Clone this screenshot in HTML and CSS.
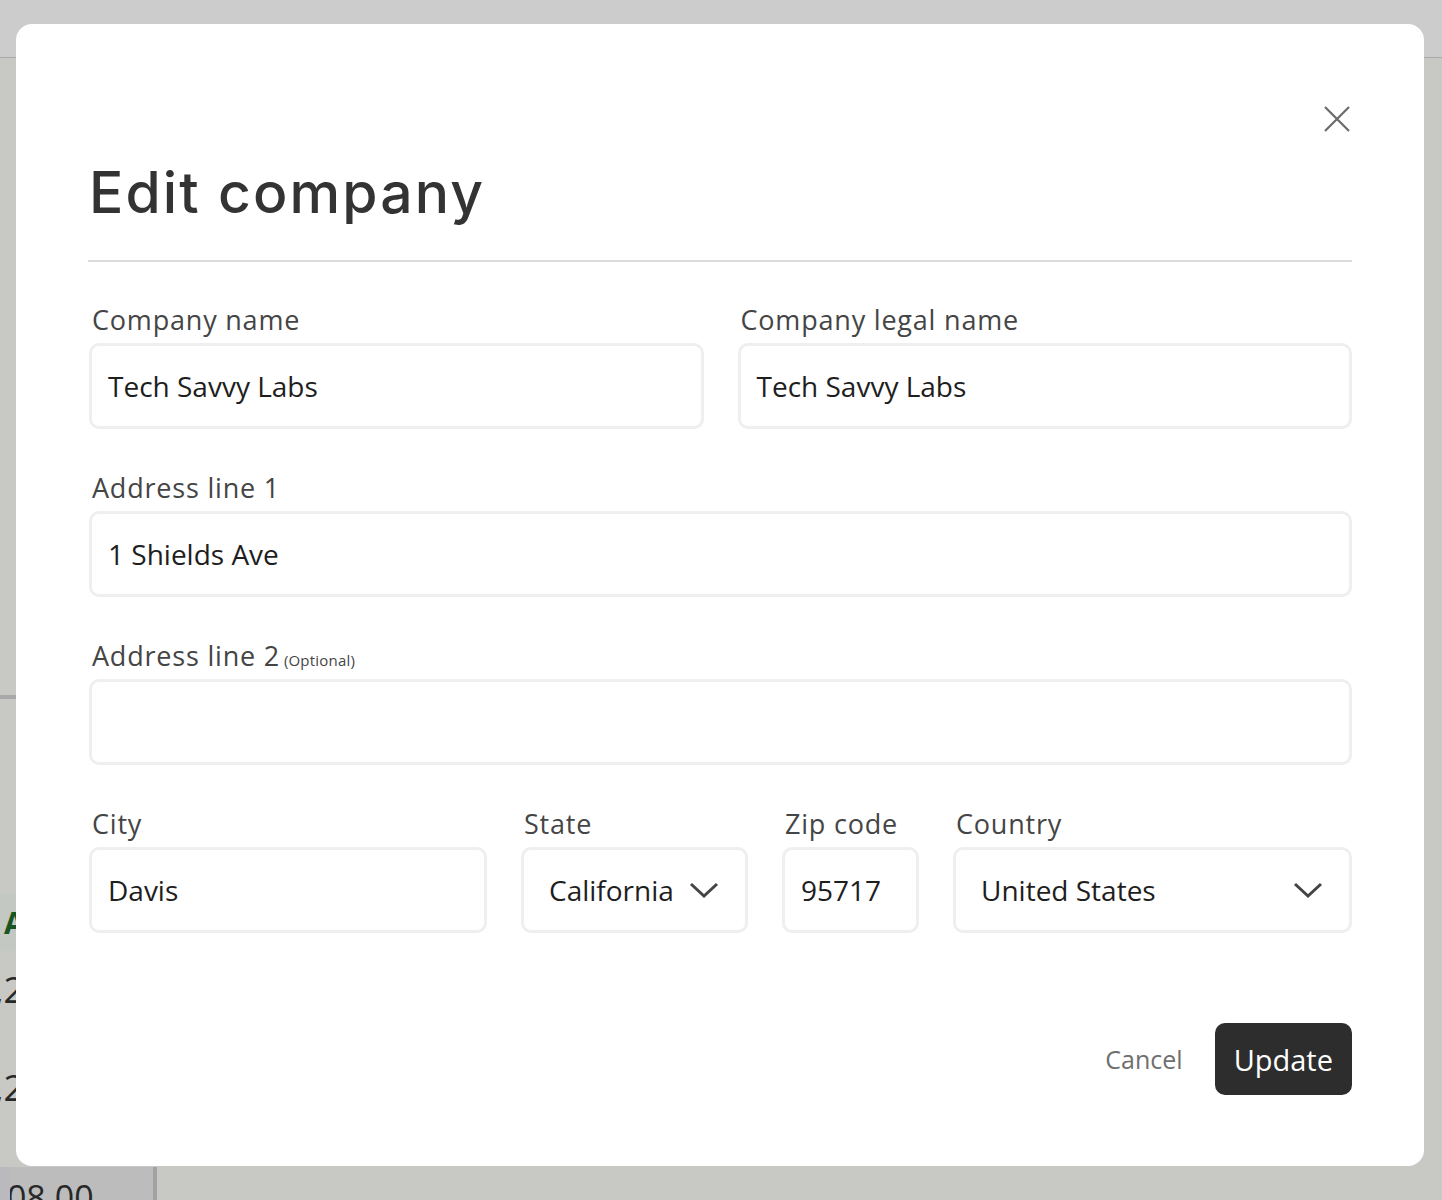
FILE: index.html
```html
<!DOCTYPE html>
<html lang="en">

<head>
  <meta charset="UTF-8" />
  <meta name="viewport" content="width=device-width, initial-scale=1.0" />
  <title>Edit company</title>
  <link rel="stylesheet" href="styles.css">
</head>

<body>
  <!-- page behind the dialog -->
  <div class="page">
    <div class="topbar"></div>
    <div class="page-body">
      <div class="side">
        <div class="side-rule"></div>
        <div class="grid-head">Amount</div>
        <div class="grid-cell"><span>$1,250.00</span></div>
        <div class="grid-cell"><span>$1,250.00</span></div>
      </div>
    </div>
    <div class="page-foot">
      <div class="foot-cell"><span>$908.00</span></div>
      <div class="foot-rest"></div>
    </div>
  </div>

  <div class="backdrop"></div>

  <div class="modal">
    <button class="close-btn" aria-label="Close">
      <svg width="28" height="28" viewBox="0 0 28 28">
        <path d="M2 2 L26 26 M26 2 L2 26" stroke="#6b6b6b" stroke-width="2.2" fill="none" />
      </svg>
    </button>

    <h1 class="modal-title">Edit company</h1>

    <form class="form">
      <div class="row two">
        <label class="field">
          <span class="label">Company name</span>
          <span class="input">Tech Savvy Labs</span>
        </label>
        <label class="field">
          <span class="label">Company legal name</span>
          <span class="input">Tech Savvy Labs</span>
        </label>
      </div>

      <label class="field">
        <span class="label">Address line 1</span>
        <span class="input">1 Shields Ave</span>
      </label>

      <label class="field">
        <span class="label">Address line 2 <small>(Optional)</small></span>
        <span class="input"></span>
      </label>

      <div class="row four">
        <label class="field">
          <span class="label">City</span>
          <span class="input">Davis</span>
        </label>
        <label class="field">
          <span class="label">State</span>
          <span class="input select">California
            <svg class="chev" width="30" height="18" viewBox="0 0 30 18">
              <path d="M2 3 L15 15 L28 3" stroke="#444" stroke-width="3" fill="none" />
            </svg>
          </span>
        </label>
        <label class="field">
          <span class="label">Zip code</span>
          <span class="input zip">95717</span>
        </label>
        <label class="field">
          <span class="label">Country</span>
          <span class="input select">United States
            <svg class="chev" width="30" height="18" viewBox="0 0 30 18">
              <path d="M2 3 L15 15 L28 3" stroke="#444" stroke-width="3" fill="none" />
            </svg>
          </span>
        </label>
      </div>

      <div class="actions">
        <button type="button" class="btn-cancel">Cancel</button>
        <button type="button" class="btn-update">Update</button>
      </div>
    </form>
  </div>
</body>

</html>
```

FILE: styles.css
```css
* {
  box-sizing: border-box;
}

body {
  margin: 0;
  height: 1200px;
  overflow: hidden;
  font-family: 'Open Sans', sans-serif;
  position: relative;
}

/* background page */
.page {
  height: 100%;
  display: flex;
  flex-direction: column;
  background: #fbfaf5;
}

.topbar {
  height: 58px;
  background: #fff;
  border-bottom: 1px solid #d4d4d4;
  flex-shrink: 0;
}

.page-body {
  flex: 1;
  display: flex;
}

.side {
  width: 200px;
  padding-top: 637px;
}

.side-rule {
  height: 4px;
  background: #d4d4d4;
}

.grid-head {
  margin-top: 195px;
  height: 57px;
  background: #f4fbf4;
  color: #1f6b2c;
  font-weight: 700;
  font-size: 30px;
  line-height: 57px;
  padding-left: 4px;
}

.grid-cell {
  width: 17px;
  height: 98px;
  display: flex;
  justify-content: flex-end;
  align-items: center;
  padding-bottom: 22px;
  font-size: 36px;
  color: #333;
  white-space: nowrap;
}

.grid-cell span {
  flex-shrink: 0;
  margin-right: -99px;
}

.page-foot {
  height: 33px;
  display: flex;
  flex-shrink: 0;
}

.foot-cell {
  width: 153px;
  background: #ececec;
  border-left: 10px solid #e8e8ee;
  font-size: 34px;
  line-height: 60px;
  color: #333;
  overflow: hidden;
  white-space: nowrap;
}

.foot-cell span {
  margin-left: -42px;
}

.foot-rest {
  flex: 1;
  border-left: 4px solid #cbcbcb;
  background: #fbfaf5;
}

.backdrop {
  position: absolute;
  inset: 0;
  background: rgba(0, 0, 0, 0.2);
}

/* dialog */
.modal {
  position: absolute;
  left: 16px;
  top: 24px;
  width: 1408px;
  height: 1142px;
  background: #fff;
  border-radius: 16px;
  padding: 0 72px 0 73px;
}

.close-btn {
  position: absolute;
  top: 81px;
  right: 73px;
  width: 28px;
  height: 28px;
  padding: 0;
  border: none;
  background: none;
  cursor: pointer;
}

.modal-title {
  margin: 0 0 0 -1px;
  padding: 135px 0 33px 1px;
  font-family: 'Inter', sans-serif;
  font-weight: 500;
  font-size: 57px;
  line-height: 68px;
  color: #333;
  letter-spacing: 2.1px;
  border-bottom: 2px solid #dcdcdc;
}

.form {
  display: flex;
  flex-direction: column;
  gap: 43px;
  padding-top: 42px;
}

.row {
  display: grid;
  gap: 34px;
}

.row.two {
  grid-template-columns: 1fr 1fr;
}

.row.four {
  grid-template-columns: 398px 227px 137px 1fr;
}

.field {
  display: flex;
  flex-direction: column;
  gap: 7px;
}

.label {
  height: 32px;
  font-size: 27px;
  font-weight: 500;
  line-height: 32px;
  letter-spacing: 0.8px;
  color: #454545;
  padding-left: 3px;
}

.label small {
  font-size: 15px;
  letter-spacing: 0.2px;
  line-height: 1;
  margin-left: -4px;
}

.input {
  height: 86px;
  flex-shrink: 0;
  border: 3px solid #efefef;
  border-radius: 10px;
  display: flex;
  align-items: center;
  padding: 0 16px;
  font-size: 28px;
  color: #1e1e1e;
}

.input.select {
  justify-content: space-between;
  padding-left: 25px;
  padding-right: 26px;
}

.input.zip {
  padding-left: 16px;
}

.chev {
  flex-shrink: 0;
}

.actions {
  display: flex;
  justify-content: flex-end;
  align-items: center;
  gap: 32px;
  margin-top: 47px;
}

.btn-cancel {
  border: none;
  background: none;
  font-family: 'Open Sans', sans-serif;
  font-size: 25px;
  font-weight: 500;
  color: #6f6f6f;
  padding: 0;
  cursor: pointer;
}

.btn-update {
  height: 72px;
  padding: 0 19px;
  border: none;
  border-radius: 10px;
  background: #2d2d2d;
  color: #fff;
  font-family: 'Open Sans', sans-serif;
  font-size: 29px;
  font-weight: 500;
  cursor: pointer;
}
```
